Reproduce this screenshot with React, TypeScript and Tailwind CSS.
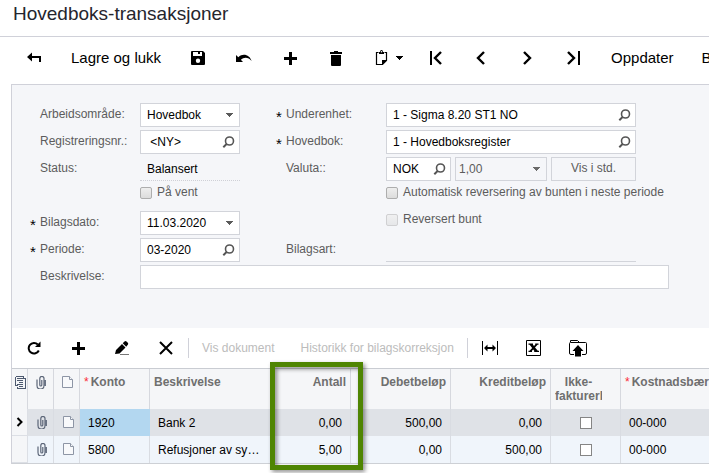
import type { ReactNode } from "react";

const LINES = [
  { konto: "1920", text: "Bank 2", antall: "0,00", debet: "500,00", kredit: "0,00", bearer: "00-000", active: true },
  { konto: "5800", text: "Refusjoner av sykepenger", antall: "5,00", debet: "0,00", kredit: "500,00", bearer: "00-000", active: false },
];

const box = "h-6 border border-[#d2d4da] bg-white";

export default function App() {
  return (
    <div className="overflow-hidden bg-white pb-3 font-['Liberation_Sans',Arial,sans-serif] text-xs text-black">
      <header className="border-b border-[#d0d1d9] pt-[2px] pb-[10px] pl-[13px]">
        <h1 className="text-[19px] leading-6 text-[#25252d]">Hovedboks-transaksjoner</h1>
      </header>

      <MainToolbar />

      <main className="ml-[11px] border-l border-[#d0d1d9]">
        <SummaryForm />
        <GridToolbar />
        <LinesTable />
      </main>
    </div>
  );
}

function MainToolbar() {
  return (
    <nav className="ml-[11px] flex h-[47px] pb-[5px]">
      <ToolButton label="Tilbake"><BackIcon /></ToolButton>
      <button className="shrink-0 px-[14px] text-[15px]">Lagre og lukk</button>
      <ToolButton label="Lagre"><SaveIcon /></ToolButton>
      <ToolButton label="Angre"><UndoIcon /></ToolButton>
      <ToolButton label="Ny"><PlusIcon /></ToolButton>
      <ToolButton label="Slett"><TrashIcon /></ToolButton>
      <button aria-label="Kopier" className="flex w-[54px] shrink-0 items-center gap-[6px] pl-[15px]">
        <ClipboardIcon />
        <Caret className="text-black" />
      </button>
      <ToolButton label="Første"><FirstIcon /></ToolButton>
      <ToolButton label="Forrige"><PrevIcon /></ToolButton>
      <ToolButton label="Neste"><NextIcon /></ToolButton>
      <ToolButton label="Siste"><LastIcon /></ToolButton>
      <button className="shrink-0 px-[14px] text-[15px]">Oppdater</button>
      <button className="shrink-0 px-[14px] text-[15px]">Bunt</button>
    </nav>
  );
}

function ToolButton({ label, children }: { label: string; children: ReactNode }) {
  return (
    <button aria-label={label} className="flex w-[46px] shrink-0 items-center justify-center">
      {children}
    </button>
  );
}

function SummaryForm() {
  return (
    <form className="border-t border-[#d0d1d9] bg-[#f5f6f9] pt-[18px] pb-[39px] pl-[18px] text-[#5c5c5c]">
      <div className="flex gap-9">
        <div className="flex w-[210px] shrink-0 flex-col gap-[3px]">
          <Row id="area" label="Arbeidsområde:">
            <div className="relative w-full">
              <select id="area" className={`${box} block w-full appearance-none px-[6px] text-black`}>
                <option>Hovedbok</option>
              </select>
              <Caret className="pointer-events-none absolute top-[10px] right-[7px] text-[#5a5a5a]" />
            </div>
          </Row>
          <Row id="refnr" label="Registreringsnr.:">
            <Lookup id="refnr" value=" <NY>" />
          </Row>
          <Row id="status" label="Status:">
            <output id="status" className="h-6 w-full border-b border-dotted border-[#cfd0d6] px-[7px] leading-6 text-black">
              Balansert
            </output>
          </Row>
          <Row>
            <Check label="På vent" />
          </Row>
          <Row id="date" label="Bilagsdato:" required>
            <div className={`${box} flex w-full items-center pr-[6px] pl-[6px]`}>
              <input id="date" defaultValue="11.03.2020" className="w-0 flex-1 text-black outline-none" />
              <button type="button" aria-label="Velg dato"><Caret className="text-[#5a5a5a]" /></button>
            </div>
          </Row>
          <Row id="period" label="Periode:" required>
            <Lookup id="period" value="03-2020" />
          </Row>
        </div>

        <div className="flex w-[360px] shrink-0 flex-col gap-[3px]">
          <Row id="branch" label="Underenhet:" required>
            <Lookup id="branch" value="1 - Sigma 8.20 ST1 NO" />
          </Row>
          <Row id="ledger" label="Hovedbok:" required>
            <Lookup id="ledger" value="1 - Hovedboksregister" />
          </Row>
          <Row id="currency" label="Valuta::">
            <div className="flex w-full gap-1">
              <div className="w-[65px]"><Lookup id="currency" value="NOK" /></div>
              <div className="relative w-[92px]">
                <select
                  aria-label="Kurs"
                  disabled
                  className="block h-6 w-full appearance-none border border-[#d2d4da] bg-[#f5f6f9] px-[3px] text-[#5c5c5c] opacity-100"
                >
                  <option>1,00</option>
                </select>
                <Caret className="pointer-events-none absolute top-[10px] right-[7px] text-[#6a6a6a]" />
              </div>
              <button type="button" className="h-6 flex-1 border border-[#d2d4da] pb-[2px]">Vis i std.</button>
            </div>
          </Row>
          <Row>
            <Check label="Automatisk reversering av bunten i neste periode" />
          </Row>
          <Row>
            <Check label="Reversert bunt" disabled />
          </Row>
          <Row id="type" label="Bilagsart:">
            <input id="type" readOnly className="h-6 w-full border-b border-[#d2d4da]" />
          </Row>
        </div>
      </div>

      <div className="mt-[3px] w-full max-w-[639px]">
        <Row id="description" label="Beskrivelse:">
          <input id="description" className={`${box} w-full px-[6px] text-black`} />
        </Row>
      </div>
    </form>
  );
}

function Row({ id, label, required, children }: { id?: string; label?: string; required?: boolean; children: ReactNode }) {
  return (
    <div className="flex h-6">
      <span className="w-[10px] shrink-0 text-[15px] leading-7 text-black">{required && "*"}</span>
      <div className="w-[100px] shrink-0 leading-[22px]">{label && <label htmlFor={id}>{label}</label>}</div>
      <div className="flex min-w-0 flex-1">{children}</div>
    </div>
  );
}

function Lookup({ id, value }: { id: string; value: string }) {
  return (
    <div className={`${box} flex w-full items-center pr-1 pl-[6px]`}>
      <input id={id} defaultValue={value} className="w-0 flex-1 text-black outline-none" />
      <button type="button" aria-label="Søk"><SearchIcon /></button>
    </div>
  );
}

function Check({ label, disabled }: { label: string; disabled?: boolean }) {
  return (
    <label className="flex items-start gap-[5px] leading-4 whitespace-nowrap">
      <input
        type="checkbox"
        disabled={disabled}
        className="mt-[3px] size-3 shrink-0 appearance-none rounded-[2px] border border-[#adadad] bg-linear-to-b from-[#eeeeee] to-[#dcdcdc] disabled:border-[#d0d0d2] disabled:from-[#f0f0f1] disabled:to-[#e6e7e9]"
      />
      {label}
    </label>
  );
}

function GridToolbar() {
  return (
    <div className="flex h-[41px] items-center border-b border-[#c9ccd2] text-[#bcbcbc]">
      <GridButton label="Oppdater linjer"><RefreshIcon /></GridButton>
      <GridButton label="Legg til linje"><PlusIcon /></GridButton>
      <GridButton label="Rediger linje"><PencilIcon /></GridButton>
      <GridButton label="Slett linje"><CrossIcon /></GridButton>
      <span className="h-5 w-px shrink-0 bg-[#d0d1d9]" />
      <button disabled className="shrink-0 px-[13px]">Vis dokument</button>
      <button disabled className="shrink-0 px-[13px]">Historikk for bilagskorreksjon</button>
      <span className="h-5 w-px shrink-0 bg-[#d0d1d9]" />
      <GridButton label="Tilpass bredde"><FitIcon /></GridButton>
      <GridButton label="Eksporter til Excel"><ExcelIcon /></GridButton>
      <GridButton label="Last opp fil"><UploadIcon /></GridButton>
    </div>
  );
}

function GridButton({ label, children }: { label: string; children: ReactNode }) {
  return (
    <button aria-label={label} className="flex h-full w-11 shrink-0 items-center justify-center text-black">
      {children}
    </button>
  );
}

const th = "border-r border-[#d6d8de] px-1 pt-[6px] align-top font-bold";
const td = "truncate border-r border-[#d9dce2] px-2";

function LinesTable() {
  return (
    <table className="w-full table-fixed border-separate border-spacing-0 border-b border-[#cdd0d5] text-left">
      <colgroup>
        <col className="w-4" />
        <col className="w-[26px]" />
        <col className="w-[26px]" />
        <col className="w-[70px]" />
        <col className="w-[121px]" />
        <col className="w-20" />
        <col className="w-[100px]" />
        <col className="w-[100px]" />
        <col className="w-[70px]" />
        <col />
      </colgroup>
      <thead>
        <tr className="h-10 bg-[#f5f6f8] leading-[14px] text-[#6f6f6f]">
          <th className="border-r border-[#d6d8de] pt-[7px] pl-[3px] align-top"><FormIcon /></th>
          <th className="border-r border-[#d6d8de] pt-[7px] pl-2 align-top"><ClipIcon /></th>
          <th className="border-r border-[#d6d8de] pt-[7px] pl-2 align-top"><NoteIcon /></th>
          <th className={th}><Star />Konto</th>
          <th className={th}>Beskrivelse</th>
          <th className={`${th} relative text-right`}>
            Antall
            <span className="pointer-events-none absolute -top-[7px] -left-px h-[108px] w-[93px] border-[5px] border-[#4f8502] drop-shadow-[2px_2px_2px_rgba(0,0,0,0.45)]" />
          </th>
          <th className={`${th} text-right`}>Debetbeløp</th>
          <th className={`${th} text-right`}>Kreditbeløp</th>
          <th className={th}>
            <span className="mr-[14px] block overflow-hidden text-center">
              Ikke-<br /><span className="block text-left">fakturerbar</span>
            </span>
          </th>
          <th className="overflow-hidden px-1 pt-[6px] align-top font-bold whitespace-nowrap"><Star />Kostnadsbærer</th>
        </tr>
      </thead>
      <tbody>
        {LINES.map((l) => (
          <tr key={l.konto} className={l.active ? "h-[27px] bg-[#dfe2e7]" : "h-[27px] bg-[#f0f5fb]"}>
            <td className="border-r border-b border-[#dcdfe5] bg-[#f5f6f8] pl-1">{l.active && <MarkerIcon />}</td>
            <td className="border-r border-[#d9dce2] pl-[9px]"><ClipIcon /></td>
            <td className="border-r border-[#d9dce2] pl-[9px]"><NoteIcon /></td>
            <td className={l.active ? "bg-[#b3d7f0] px-2" : td}>{l.konto}</td>
            <td className={td}>{l.text}</td>
            <td className={`${td} text-right`}>{l.antall}</td>
            <td className={`${td} text-right`}>{l.debet}</td>
            <td className={`${td} text-right`}>{l.kredit}</td>
            <td className="border-r border-[#d9dce2]">
              <input
                type="checkbox"
                aria-label="Ikke-fakturerbar"
                className="mx-auto block size-3 appearance-none border border-[#858585] bg-white"
              />
            </td>
            <td className="truncate px-2">{l.bearer}</td>
          </tr>
        ))}
      </tbody>
    </table>
  );
}

function Star() {
  return <span className="mr-[2px] font-normal text-red-500">*</span>;
}

/* icons */

function Caret({ className }: { className: string }) {
  return (
    <svg width="7" height="4" viewBox="0 0 7 4" className={className} shapeRendering="crispEdges">
      <path d="M0 0h7L3.5 4z" fill="currentColor" />
    </svg>
  );
}

function SearchIcon() {
  return (
    <svg width="13" height="12" viewBox="0 0 13 12" fill="none" stroke="#555" className="block">
      <circle cx="7.5" cy="5" r="4" strokeWidth="1.6" />
      <path d="M4.6 8L1.3 11.200" strokeWidth="2" />
    </svg>
  );
}

function BackIcon() {
  return (
    <svg width="16" height="12" viewBox="0 0 16 12">
      <path d="M1 5l5-4.5V4h9v6h-2V6H6v3.5z" />
    </svg>
  );
}

function SaveIcon() {
  return (
    <svg width="16" height="16" viewBox="0 0 16 16">
      <path fillRule="evenodd" d="M1 2q0-1 1-1h11l2 2v11q0 1-1 1H2q-1 0-1-1zM3 2v4h9V2h-2v2H8V2zM8 8.5a2.2 2.2 0 100 4.400a2.200 2.200 0 100-4.400z" />
    </svg>
  );
}

function UndoIcon() {
  return (
    <svg width="16" height="12" viewBox="0 0 16 12">
      <path d="M0 3v7h7L4.800 7.800C8 4.800 12.500 5 15.500 9 14 3.500 7.500.5 2.300 5.200z" />
    </svg>
  );
}

function PlusIcon() {
  return (
    <svg width="13" height="13" viewBox="0 0 13 13" shapeRendering="crispEdges">
      <path d="M5 0h3v5h5v3H8v5H5V8H0V5h5z" />
    </svg>
  );
}

function TrashIcon() {
  return (
    <svg width="12" height="15" viewBox="0 0 12 15">
      <path d="M4 0h4v1h4v2H0V1h4zM1 4h10v10q0 1-1 1H2q-1 0-1-1z" />
    </svg>
  );
}

function ClipboardIcon() {
  return (
    <svg width="16" height="16" viewBox="0 0 16 16">
      <path d="M4.500 2.500h-2v12h6l4-4v-8h-2" fill="none" stroke="#000" strokeWidth="1.200" />
      <path d="M5 4V2h1q0-2 1.500-2T9 2h1v2zM8 15v-5h5z" />
      <circle cx="7.500" cy="1.800" r=".7" fill="#fff" />
    </svg>
  );
}

function FirstIcon() {
  return (
    <svg width="14" height="14" viewBox="0 0 14 14" fill="none" stroke="#000" strokeWidth="2">
      <path d="M2 0v14" />
      <path d="M12 1L6 7l6 6" strokeWidth="2.400" />
    </svg>
  );
}

function PrevIcon() {
  return (
    <svg width="12" height="14" viewBox="0 0 12 14" fill="none" stroke="#000" strokeWidth="2.400">
      <path d="M8 1L2 7l6 6" />
    </svg>
  );
}

function NextIcon() {
  return (
    <svg width="12" height="14" viewBox="0 0 12 14" fill="none" stroke="#000" strokeWidth="2.400">
      <path d="M2 1l6 6-6 6" />
    </svg>
  );
}

function LastIcon() {
  return (
    <svg width="14" height="14" viewBox="0 0 14 14" fill="none" stroke="#000">
      <path d="M1 1l6 6-6 6" strokeWidth="2.400" />
      <path d="M12 0v14" strokeWidth="2" />
    </svg>
  );
}

function RefreshIcon() {
  return (
    <svg width="14" height="14" viewBox="0 0 14 14">
      <path d="M11.800 9.500A5.300 5.300 0 1110.800 3.500" fill="none" stroke="#000" strokeWidth="2" />
      <path d="M13.500.5V6H8z" />
    </svg>
  );
}

function PencilIcon() {
  return (
    <svg width="16" height="14" viewBox="0 0 16 14">
      <path d="M1 13l1-4 6-6 3.500 3.500-6 6zM8.700 2.300l1.800-1.800q1-.8 2 0l1.300 1.300q.8 1 0 2L12.200 5.800z" />
      <path d="M6 13.500h9" stroke="#777" />
    </svg>
  );
}

function CrossIcon() {
  return (
    <svg width="14" height="14" viewBox="0 0 14 14" stroke="#000" strokeWidth="2">
      <path d="M1 1l12 12M13 1L1 13" />
    </svg>
  );
}

function FitIcon() {
  return (
    <svg width="16" height="14" viewBox="0 0 16 14">
      <path d="M0 0h1v14H0zM15 0h1v14h-1zM2 7l3.500-3.500V6h5V3.500L14 7l-3.500 3.500V8h-5v2.500z" />
    </svg>
  );
}

function ExcelIcon() {
  return (
    <svg width="16" height="16" viewBox="0 0 16 16">
      <path d="M.5.500h14v15H.5z" fill="none" stroke="#000" />
      <path d="M2.500 3.500H7v1.300l1 1.200 1.200-1.200V3.500h3.300v1.300h-1L9 7.500l2.800 3.200h1.200V12H8.200v-1.300L7.200 9.500 6 10.700V12H2.500v-1.300h1L6.200 8 3.600 4.800H2.500z" />
    </svg>
  );
}

function UploadIcon() {
  return (
    <svg width="18" height="17" viewBox="0 0 18 17">
      <path d="M5 14.500H2q-1.500 0-1.500-1.500V3.500q0-1 1-1h15q1 0 1 1V13q0 1.500-1.500 1.500h-3M1.500 2V.5h7l2 2" fill="none" stroke="#000" />
      <path d="M9 5l5.500 6H12v5.500H6V11H3.500z" />
    </svg>
  );
}

function FormIcon() {
  return (
    <svg width="11" height="13" viewBox="0 0 11 13" fill="none" stroke="#4e5a70" shapeRendering="crispEdges">
      <path d="M.5.5h8v2M.5.500v9h2M2 2.500h8.500v10h-8v-2M2 4.500h6M4 6.500h4M2 8.500h6M4 10.500h4" />
    </svg>
  );
}

function ClipIcon() {
  return (
    <svg width="10" height="13" viewBox="0 0 10 13" fill="none" stroke="#5c6678" strokeWidth="1.200">
      <path d="M1 3.500v6a3 3 0 007 0V2.500a2 2 0 00-4.200 0v6.500a1 1 0 002 0V4M9.300 4v6" />
    </svg>
  );
}

function NoteIcon() {
  return (
    <svg width="12" height="13" viewBox="0 0 12 13" fill="#f8f9fb" stroke="#8d95a5">
      <path d="M.5.500h7l3 3v8H.5z" />
      <path d="M7.500.500v3h3" />
    </svg>
  );
}

function MarkerIcon() {
  return (
    <svg width="8" height="10" viewBox="0 0 8 10" fill="none" stroke="#000" strokeWidth="2">
      <path d="M1.500 1l4 4-4 4" />
    </svg>
  );
}
